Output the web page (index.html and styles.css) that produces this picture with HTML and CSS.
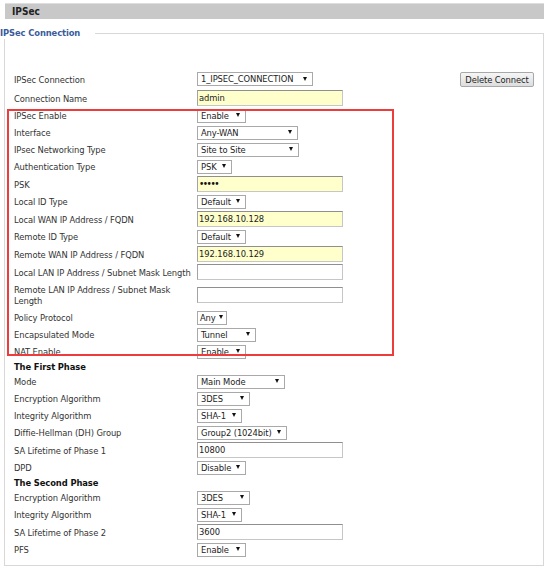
FILE: index.html
```html
<!DOCTYPE html>
<html>
<head>
<meta charset="utf-8">
<link rel="stylesheet" href="styles.css">
</head>
<body>
<div class="bar">IPSec</div>
<fieldset class="box">
  <legend class="legend">IPSec Connection</legend>
  <div class="content">
    <div class="row r1">
      <div class="lbl">IPSec Connection</div>
      <div class="sel w116"><span>1_IPSEC_CONNECTION</span><i class="arr"></i></div>
      <div class="btn">Delete Connect</div>
    </div>
    <div class="row ri">
      <div class="lbl">Connection Name</div>
      <div class="inp yel">admin</div>
    </div>
    <div class="hl">
      <div class="row">
        <div class="lbl">IPSec Enable</div>
        <div class="sel w49"><span>Enable</span><i class="arr"></i></div>
      </div>
      <div class="row">
        <div class="lbl">Interface</div>
        <div class="sel w101"><span>Any-WAN</span><i class="arr"></i></div>
      </div>
      <div class="row">
        <div class="lbl">IPsec Networking Type</div>
        <div class="sel w102"><span>Site to Site</span><i class="arr"></i></div>
      </div>
      <div class="row">
        <div class="lbl">Authentication Type</div>
        <div class="sel w35"><span>PSK</span><i class="arr"></i></div>
      </div>
      <div class="row ri">
        <div class="lbl">PSK</div>
        <div class="inp yel"><span class="dots">•••••</span></div>
      </div>
      <div class="row">
        <div class="lbl">Local ID Type</div>
        <div class="sel w49"><span>Default</span><i class="arr"></i></div>
      </div>
      <div class="row ri">
        <div class="lbl">Local WAN IP Address / FQDN</div>
        <div class="inp yel">192.168.10.128</div>
      </div>
      <div class="row">
        <div class="lbl">Remote ID Type</div>
        <div class="sel w49"><span>Default</span><i class="arr"></i></div>
      </div>
      <div class="row ri">
        <div class="lbl">Remote WAN IP Address / FQDN</div>
        <div class="inp yel">192.168.10.129</div>
      </div>
      <div class="row ri">
        <div class="lbl">Local LAN IP Address / Subnet Mask Length</div>
        <div class="inp"></div>
      </div>
      <div class="row rt">
        <div class="lbl">Remote LAN IP Address / Subnet Mask Length</div>
        <div class="inp"></div>
      </div>
      <div class="row">
        <div class="lbl">Policy Protocol</div>
        <div class="sel w30"><span>Any</span><i class="arr"></i></div>
      </div>
      <div class="row">
        <div class="lbl">Encapsulated Mode</div>
        <div class="sel w59"><span>Tunnel</span><i class="arr"></i></div>
      </div>
      <div class="row">
        <div class="lbl">NAT Enable</div>
        <div class="sel w49"><span>Enable</span><i class="arr"></i></div>
      </div>
    </div>
    <div class="row rh"><div class="head">The First Phase</div></div>
    <div class="row">
      <div class="lbl">Mode</div>
      <div class="sel w88"><span>Main Mode</span><i class="arr"></i></div>
    </div>
    <div class="row">
      <div class="lbl">Encryption Algorithm</div>
      <div class="sel w53"><span>3DES</span><i class="arr"></i></div>
    </div>
    <div class="row">
      <div class="lbl">Integrity Algorithm</div>
      <div class="sel w45"><span>SHA-1</span><i class="arr"></i></div>
    </div>
    <div class="row">
      <div class="lbl">Diffie-Hellman (DH) Group</div>
      <div class="sel w90"><span>Group2 (1024bit)</span><i class="arr"></i></div>
    </div>
    <div class="row ri">
      <div class="lbl">SA Lifetime of Phase 1</div>
      <div class="inp">10800</div>
    </div>
    <div class="row">
      <div class="lbl">DPD</div>
      <div class="sel w49"><span>Disable</span><i class="arr"></i></div>
    </div>
    <div class="row rh"><div class="head">The Second Phase</div></div>
    <div class="row">
      <div class="lbl">Encryption Algorithm</div>
      <div class="sel w53"><span>3DES</span><i class="arr"></i></div>
    </div>
    <div class="row">
      <div class="lbl">Integrity Algorithm</div>
      <div class="sel w45"><span>SHA-1</span><i class="arr"></i></div>
    </div>
    <div class="row ri">
      <div class="lbl">SA Lifetime of Phase 2</div>
      <div class="inp">3600</div>
    </div>
    <div class="row">
      <div class="lbl">PFS</div>
      <div class="sel w49"><span>Enable</span><i class="arr"></i></div>
    </div>
  </div>
</fieldset>
</body>
</html>
```
FILE: styles.css
```css
body {
  margin: 0;
  background: #fff;
  font-family: "DejaVu Sans Condensed", "Liberation Sans", Arial, sans-serif;
  font-stretch: condensed;
  font-size: 9.3px;
  letter-spacing: -0.1px;
  color: #333;
}
.bar {
  margin: 3px 10px 0 5px;
  height: 16px;
  box-sizing: border-box;
  background: #c8c8c8;
  border-top: 1px solid #dedede;
  padding-left: 7px;
  font-size: 10px;
  font-weight: bold;
  letter-spacing: 0;
  line-height: 15px;
  color: #222;
}
.box {
  margin: 8px 10px 0 4px;
  padding: 0;
  border: 1px solid #d8d8d8;
  min-width: 0;
}
.legend {
  margin-left: -5px;
  padding: 0 15px 0 0;
  height: 12px;
  line-height: 12px;
  font-weight: bold;
  color: #3a5b9c;
  letter-spacing: -0.1px;
}
.content {
  padding: 30px 9px 7px 9px;
}
.row {
  display: flex;
  align-items: center;
  height: 17px;
}
.r1 { height: 20px; }
.ri { height: 18px; }
.rt { height: 28px; }
.rh { height: 13px; }
.lbl {
  width: 183px;
  flex: none;
  line-height: 11px;
}
.head {
  font-weight: bold;
  color: #111;
}
.sel {
  display: flex;
  align-items: center;
  height: 14px;
  box-sizing: border-box;
  border: 1px solid #a9a9a9;
  background: #fff;
  padding-left: 3px;
  white-space: nowrap;
  overflow: hidden;
  line-height: 12px;
  color: #222;
}
.arr {
  margin-left: auto;
  margin-right: 5px;
  flex: none;
  width: 0;
  height: 0;
  border-left: 2.5px solid transparent;
  border-right: 2.5px solid transparent;
  border-top: 4px solid #111;
  margin-top: -1px;
}
.w30 { width: 30px; padding-left: 2px; }
.w30 .arr { margin-right: 3px; margin-left: 3px; }
.w35 { width: 35px; }
.w45 { width: 45px; }
.w49 { width: 49px; }
.w53 { width: 53px; }
.w59 { width: 59px; }
.w88 { width: 88px; }
.w90 { width: 90px; }
.w101 { width: 101px; }
.w102 { width: 102px; }
.w116 { width: 116px; }
.inp {
  width: 146px;
  height: 16px;
  box-sizing: border-box;
  border: 1px solid #c6c6c6;
  border-top-color: #8f8f8f;
  border-left-color: #a3a3a3;
  background: #fff;
  padding-left: 1px;
  line-height: 14px;
  color: #222;
  overflow: hidden;
}
.yel { background: #ffffcc; }
.dots {
  font-size: 10px;
  letter-spacing: -1.5px;
  line-height: 14px;
  color: #111;
}
.btn {
  margin-left: auto;
  width: 74px;
  height: 15px;
  box-sizing: border-box;
  border: 1px solid #a8a8a8;
  border-radius: 2px;
  background: linear-gradient(#f6f6f6, #dddddd);
  text-align: center;
  line-height: 13px;
  color: #222;
  white-space: nowrap;
}
.hl {
  position: relative;
}
.hl::after {
  content: "";
  position: absolute;
  left: -7px;
  right: 140px;
  top: 2px;
  bottom: 4px;
  border: 2px solid #ee3b3b;
  pointer-events: none;
}
```
